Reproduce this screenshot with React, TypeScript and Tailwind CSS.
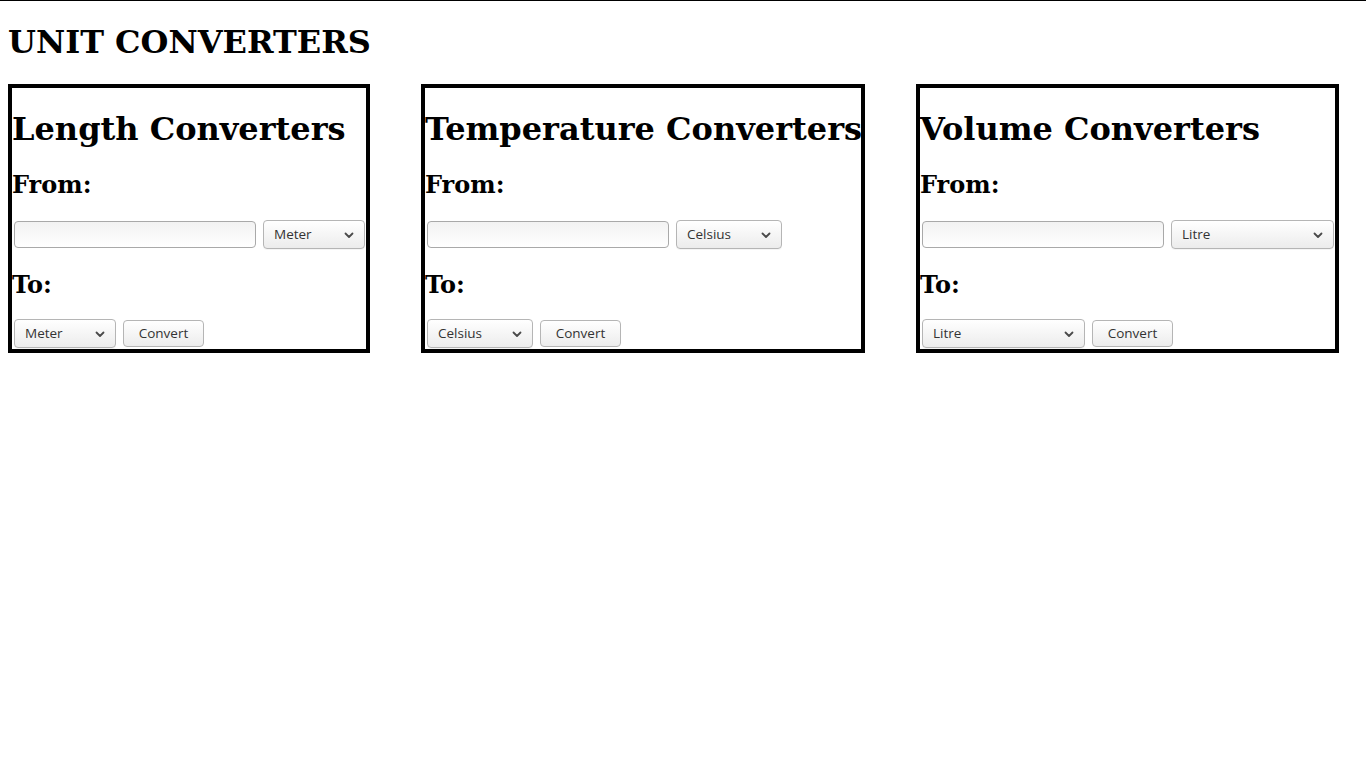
const converters = [
  {
    title: "Length Converters",
    unit: "Meter",
    boxW: "w-[362px]",
    selW: "w-[102px]",
  },
  {
    title: "Temperature Converters",
    unit: "Celsius",
    boxW: "w-[444px]",
    selW: "w-[106px]",
  },
  {
    title: "Volume Converters",
    unit: "Litre",
    boxW: "w-[423px]",
    selW: "w-[163px]",
  },
];

function Select({ value, width }: { value: string; width: string }) {
  return (
    <div
      className={`${width} h-[29px] flex items-center justify-between pl-[10px] pr-[9px] rounded-[4px] border border-[#b5b5b5] bg-gradient-to-b from-white to-[#ececec] text-[13.5px] text-[#333] font-['Open_Sans',sans-serif] shadow-[0_1px_0_rgba(0,0,0,0.04)]`}
    >
      <span>{value}</span>
      <svg width="12" height="12" viewBox="0 0 12 12" fill="none">
        <path d="M2.5 4.5 6 8l3.5-3.5" stroke="#4a4a4a" strokeWidth="1.8" strokeLinecap="round" strokeLinejoin="round" />
      </svg>
    </div>
  );
}

export default function App() {
  return (
    <div className="min-h-screen bg-white border-t border-black px-2 text-black font-['DejaVu_Serif',serif]">
      {/* title */}
      <h1 className="text-[32px] leading-[37px] font-bold mt-[23px] mb-[23px]">UNIT CONVERTERS</h1>

      {/* boxes */}
      <div className="flex gap-[51px] items-start">
        {converters.map((c) => (
          <div key={c.title} className={`${c.boxW} h-[269px] border-4 border-black`}>
            <h1 className="text-[32px] leading-[37px] font-bold mt-[23px] whitespace-nowrap">{c.title}</h1>
            <h2 className="text-[24px] leading-[28px] font-bold mt-[23px]">From:</h2>

            <div className="flex items-start gap-[7px] mt-[21px] ml-[2px]">
              <input
                type="text"
                className="w-[242px] h-[27px] mt-[1px] rounded-[4px] border border-[#a9a9a9] bg-gradient-to-b from-[#f2f2f2] to-white outline-none"
              />
              <Select value={c.unit} width={c.selW} />
            </div>

            <h2 className="text-[24px] leading-[28px] font-bold mt-[22px]">To:</h2>

            <div className="flex items-start gap-[7px] mt-[20px] ml-[2px]">
              <Select value={c.unit} width={c.selW} />
              <button className="w-[81px] h-[27px] mt-[1px] rounded-[4px] border border-[#b5b5b5] bg-gradient-to-b from-white to-[#ececec] text-[13.5px] text-[#333] font-['Open_Sans',sans-serif]">
                Convert
              </button>
            </div>
          </div>
        ))}
      </div>
    </div>
  );
}
